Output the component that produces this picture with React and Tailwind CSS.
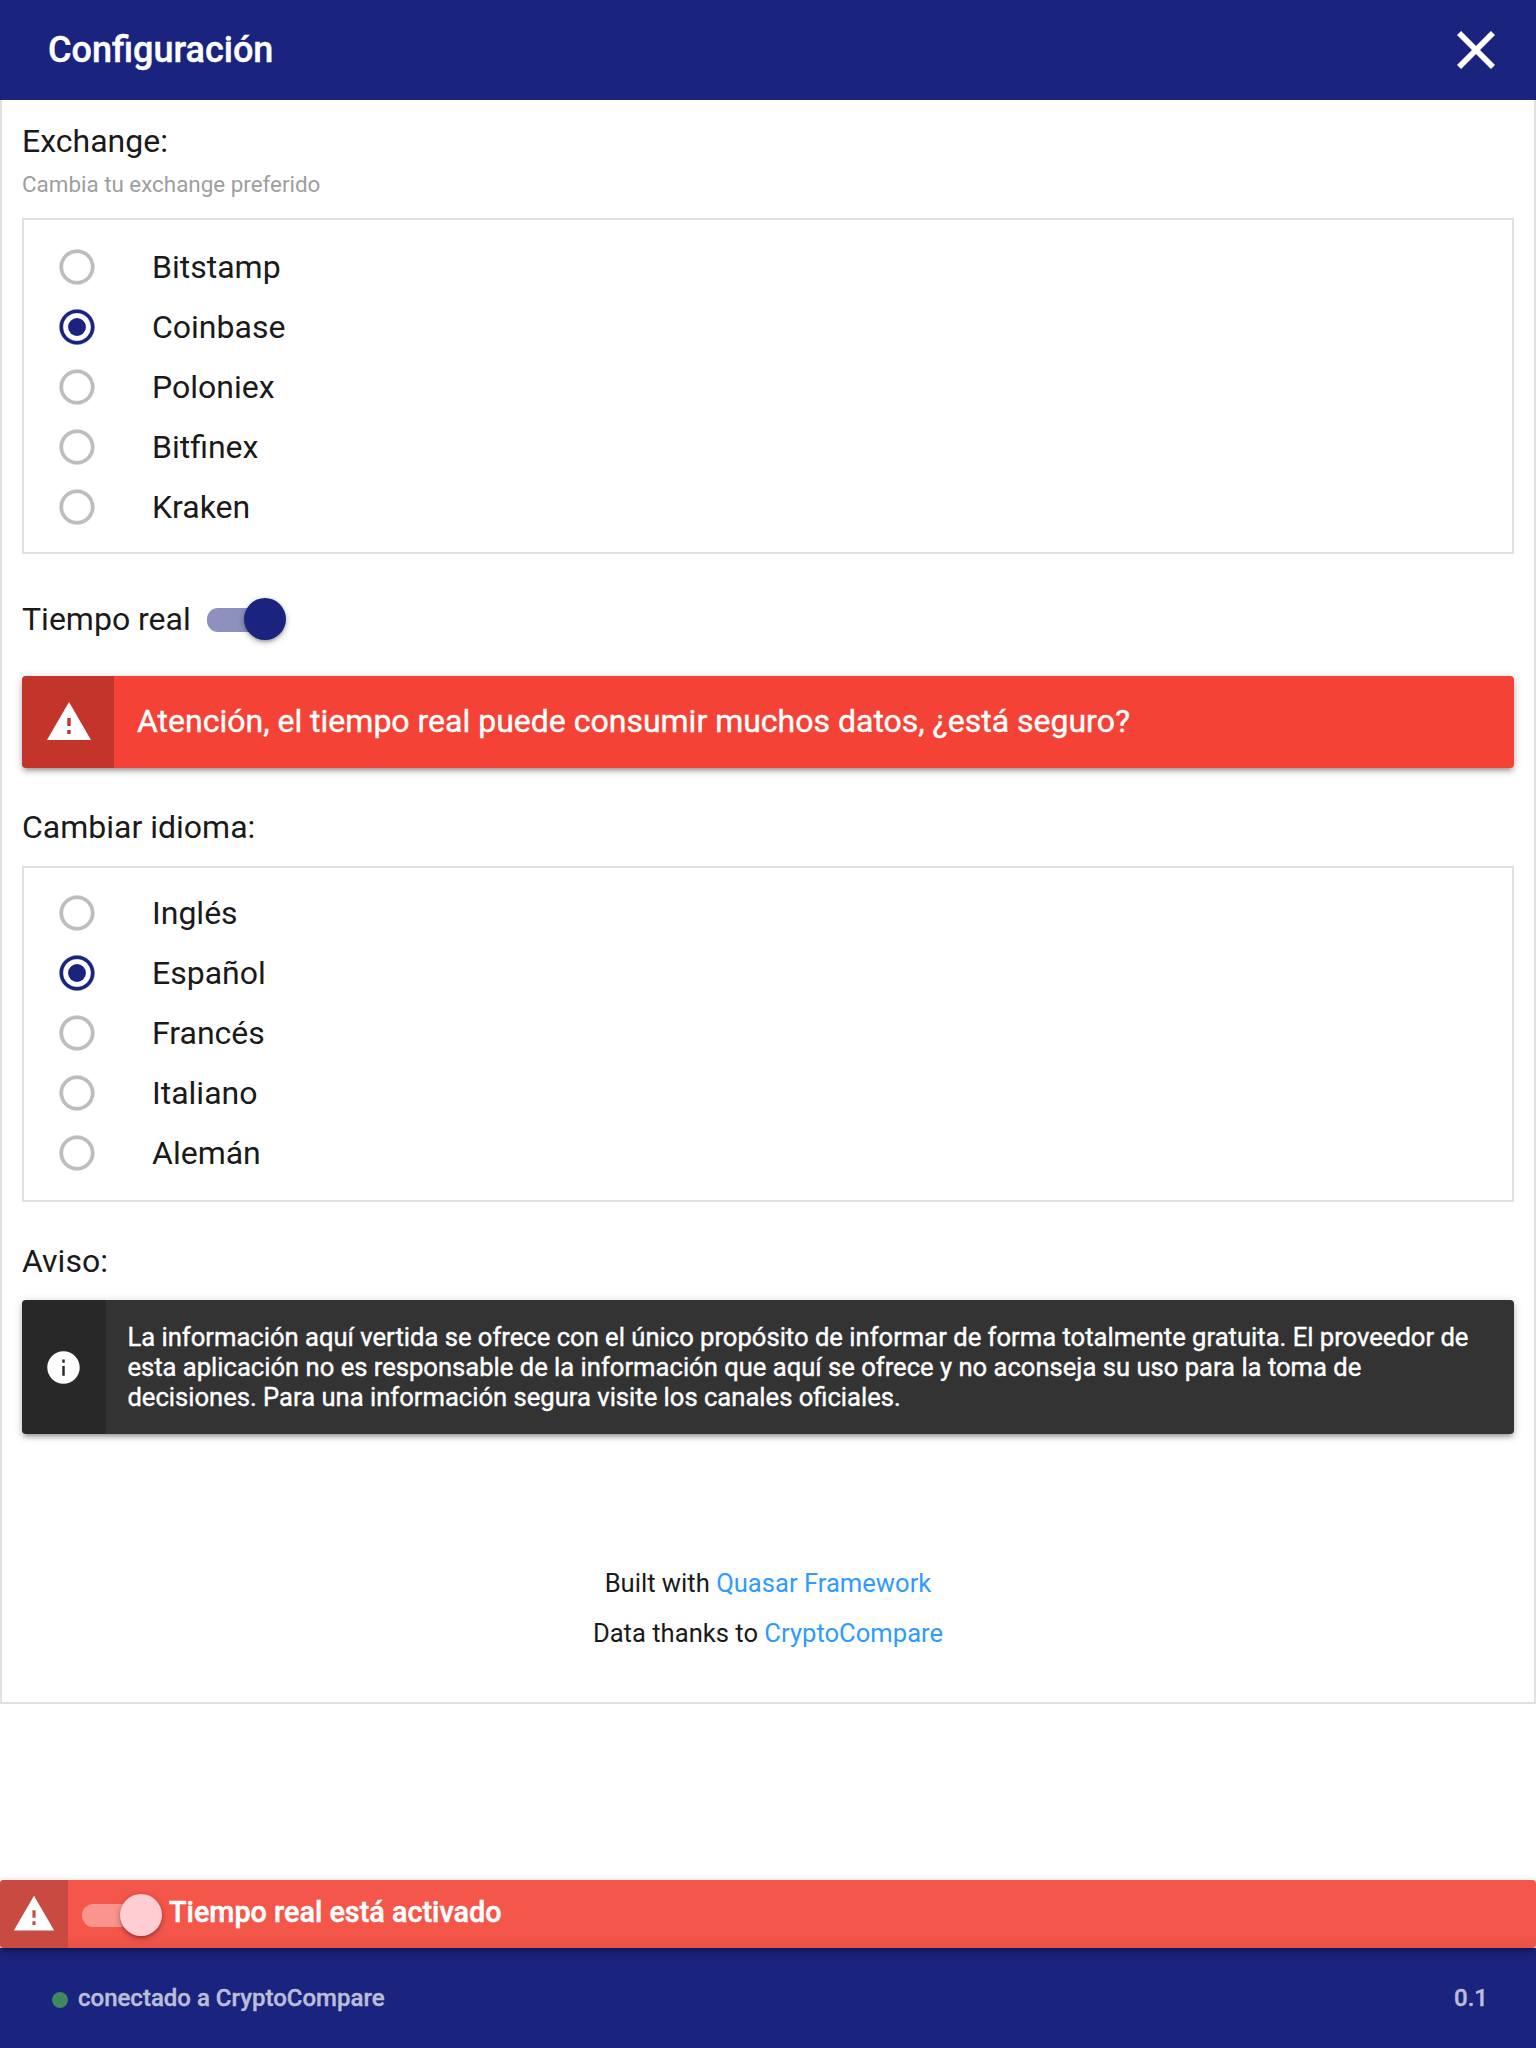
const EXCHANGES = ["Bitstamp", "Coinbase", "Poloniex", "Bitfinex", "Kraken"];
const LANGUAGES = ["Inglés", "Español", "Francés", "Italiano", "Alemán"];

function WarningIcon({ className }) {
  return (
    <svg viewBox="0 0 24 24" fill="currentColor" className={className}>
      <path fillRule="evenodd" d="M1 21h22L12 2 1 21zM12.85 18h-1.7v-2h1.7v2zm0-4h-1.7v-4h1.7v4z" />
    </svg>
  );
}

function InfoIcon({ className }) {
  return (
    <svg viewBox="0 0 24 24" fill="currentColor" className={className}>
      <path
        fillRule="evenodd"
        d="M12 2C6.48 2 2 6.48 2 12s4.48 10 10 10 10-4.48 10-10S17.52 2 12 2zM12.75 17h-1.5v-6h1.5v6zm0-8h-1.5V7h1.5v2z"
      />
    </svg>
  );
}

function CloseIcon({ className }) {
  return (
    <svg viewBox="0 0 24 24" fill="currentColor" className={className}>
      <path
        stroke="currentColor"
        strokeWidth="0.2"
        d="M19 6.41L17.59 5 12 10.59 6.41 5 5 6.41 10.59 12 5 17.59 6.41 19 12 13.41 17.59 19 19 17.59 13.41 12z"
      />
    </svg>
  );
}

function RadioIcon({ checked }) {
  return (
    <svg
      viewBox="0 0 24 24"
      fill="currentColor"
      className={checked ? "size-[42px] text-[#1a237e]" : "size-[42px] text-[#bdbdbd]"}
    >
      <path
        stroke="currentColor"
        strokeWidth="0.15"
        d="M12 2C6.48 2 2 6.48 2 12s4.48 10 10 10 10-4.48 10-10S17.52 2 12 2zm0 18c-4.42 0-8-3.58-8-8s3.58-8 8-8 8 3.58 8 8-3.58 8-8 8z"
      />
      {checked && <circle cx="12" cy="12" r="5.1" />}
    </svg>
  );
}

function RadioList({ options, selected, className }) {
  return (
    <div role="radiogroup" className={`h-[336px] border-2 border-[#e0e0e0] ${className}`}>
      {options.map((name) => (
        <div key={name} role="radio" aria-checked={name === selected} className="flex h-[60px] items-center pl-8">
          <RadioIcon checked={name === selected} />
          <span className="ml-[54px] text-[32px] leading-[60px]">{name}</span>
        </div>
      ))}
    </div>
  );
}

export default function App() {
  return (
    <div className="flex h-[2048px] w-[1536px] flex-col bg-white font-[Roboto,sans-serif] text-[#1a1a1a]">
      <header className="flex h-[100px] shrink-0 items-center justify-between bg-[#1a237e] pr-7 pl-12 text-white">
        <h1 className="text-[36px] leading-[100px] font-medium [-webkit-text-stroke:0.4px_currentColor]">Configuración</h1>
        <CloseIcon className="size-16" />
      </header>

      <main className="h-[1604px] shrink-0 border-x-2 border-b-2 border-[#e0e0e0] px-5">
        <h2 className="pt-5 text-[32px] leading-[42px]">Exchange:</h2>
        <p className="mb-[18px] pt-[7px] text-[22.4px] leading-[31px] text-[#9e9e9e]">Cambia tu exchange preferido</p>
        <RadioList options={EXCHANGES} selected="Coinbase" className="pt-[17px]" />

        <div className="flex h-[122px] items-center pt-[10px]">
          <span className="h-[44px] w-[185px] text-[32px] leading-[42px]">Tiempo real</span>
          <span className="relative block h-6 w-[79px]">
            <span className="block h-6 w-16 rounded-[11px] bg-[#1a237e]/50" />
            <span className="absolute -top-[10px] left-[37px] size-[42px] rounded-full bg-[#1a237e] shadow-[0_2px_6px_rgba(0,0,0,0.3),0_2px_2px_rgba(0,0,0,0.14)]" />
          </span>
        </div>

        <div className="flex h-[92px] overflow-hidden rounded-[4px] bg-[#f44336] text-white shadow-[0_2px_10px_rgba(0,0,0,0.2),0_4px_4px_rgba(0,0,0,0.14),0_6px_2px_-4px_rgba(0,0,0,0.12)]">
          <div className="flex w-[92px] items-center justify-center bg-black/20 pl-px">
            <WarningIcon className="size-12" />
          </div>
          <p className="pl-[23px] text-[32px] leading-[90px] [-webkit-text-stroke:0.4px_currentColor]">
            Atención, el tiempo real puede consumir muchos datos, ¿está seguro?
          </p>
        </div>

        <h2 className="mb-[17px] pt-[38px] text-[32px] leading-[43px]">Cambiar idioma:</h2>
        <RadioList options={LANGUAGES} selected="Español" className="pt-[15px]" />

        <h2 className="mb-[17px] pt-[38px] text-[32px] leading-[43px]">Aviso:</h2>
        <div className="flex h-[134px] overflow-hidden rounded-[4px] bg-[#333333] text-white shadow-[0_2px_10px_rgba(0,0,0,0.2),0_4px_4px_rgba(0,0,0,0.14),0_6px_2px_-4px_rgba(0,0,0,0.12)]">
          <div className="flex w-[84px] shrink-0 items-center justify-center bg-black/20 pr-px">
            <InfoIcon className="size-[39px]" />
          </div>
          <p className="pt-[22px] pl-[21.4px] text-[25.6px] leading-[30px] whitespace-nowrap [-webkit-text-stroke:0.4px_currentColor]">
            La información aquí vertida se ofrece con el único propósito de informar de forma totalmente gratuita. El proveedor de
            <br />
            esta aplicación no es responsable de la información que aquí se ofrece y no aconseja su uso para la toma de
            <br />
            decisiones. Para una información segura visite los canales oficiales.
          </p>
        </div>

        <div className="pt-[124px] text-center text-[25.6px] leading-[50px]">
          <p>
            Built with <a className="text-[#2f9bff]">Quasar Framework</a>
          </p>
          <p>
            Data thanks to <a className="text-[#2f9bff]">CryptoCompare</a>
          </p>
        </div>
      </main>

      <div className="flex-1" />

      <div className="relative z-10 flex h-[68px] shrink-0 overflow-hidden rounded-[4px] bg-[#f5564a] text-white shadow-[0_2px_10px_rgba(0,0,0,0.2),0_4px_4px_rgba(0,0,0,0.14),0_6px_2px_-4px_rgba(0,0,0,0.12)]">
        <div className="flex w-[68px] items-center justify-center bg-[#c84a40]">
          <WarningIcon className="size-[44px]" />
        </div>
        <div className="flex flex-1 items-center bg-linear-to-b from-transparent from-80% to-black/5 pl-[14px]">
          <span className="relative mt-[3px] block h-[23px] w-[87px]">
            <span className="block h-[23px] w-16 rounded-full bg-[#fa948f]" />
            <span className="absolute -top-[10px] left-[38px] size-[42px] rounded-full bg-[#ffcdd2] shadow-[0_2px_6px_rgba(0,0,0,0.3),0_2px_2px_rgba(0,0,0,0.14)]" />
          </span>
          <span className="mb-1 text-[28.8px] leading-[64px] font-medium [-webkit-text-stroke:0.5px_currentColor]">
            Tiempo real está activado
          </span>
        </div>
      </div>

      <footer className="flex h-[100px] shrink-0 items-center bg-[#1a237e] pr-12 pl-[49px] text-[24px] font-medium text-[#babdd8] [-webkit-text-stroke:0.4px_currentColor]">
        <span className="mt-1 ml-[3px] size-4 rounded-full bg-[#40875f]" />
        <span className="ml-[10px] flex-1">conectado a CryptoCompare</span>
        <span>0.1</span>
      </footer>
    </div>
  );
}
